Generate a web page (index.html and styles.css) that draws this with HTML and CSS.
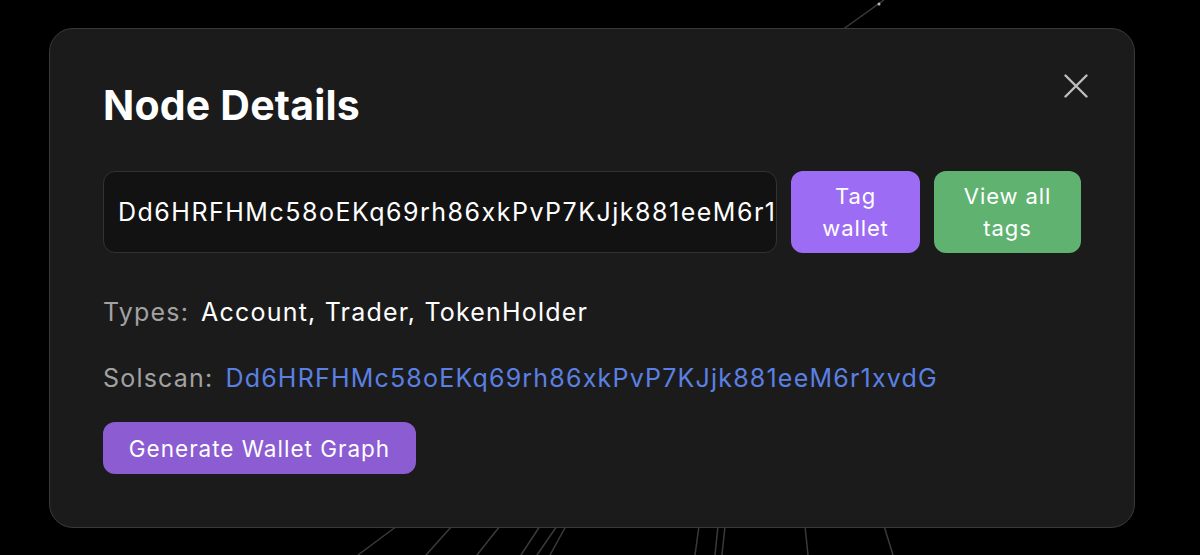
FILE: index.html
```html
<!DOCTYPE html>
<html lang="en">
<head>
<meta charset="utf-8">
<title>Node Details</title>
<link rel="stylesheet" href="styles.css">
</head>
<body>
<div class="stage">
  <svg class="graph" width="1200" height="555" viewBox="0 0 1200 555">
    <g stroke="#3a3a3a" stroke-width="1.5" fill="none">
      <line x1="884" y1="0" x2="842" y2="30"/>
      <line x1="397" y1="526" x2="358" y2="555"/>
      <line x1="452" y1="526" x2="426" y2="555"/>
      <line x1="500" y1="526" x2="477" y2="555"/>
      <line x1="540" y1="526" x2="521" y2="555"/>
      <line x1="557" y1="526" x2="537" y2="555"/>
      <line x1="566" y1="526" x2="550" y2="555"/>
      <line x1="699" y1="526" x2="695" y2="555"/>
      <line x1="718" y1="526" x2="715" y2="555"/>
      <line x1="725" y1="526" x2="722" y2="555"/>
      <line x1="805" y1="526" x2="808" y2="555"/>
      <line x1="884" y1="526" x2="893" y2="555"/>
    </g>
    <circle cx="879" cy="4" r="1.5" fill="#bbb"/>
  </svg>
  <div class="modal">
    <button class="close" aria-label="Close">
      <svg width="24" height="24" viewBox="0 0 24 24"><path d="M1.5 1.5L22.5 22.5M22.5 1.5L1.5 22.5" stroke="#bdbdbd" stroke-width="2.4" stroke-linecap="round"/></svg>
    </button>
    <h1 class="title">Node Details</h1>
    <div class="wallet-row">
      <input class="address-box" type="text" readonly value="Dd6HRFHMc58oEKq69rh86xkPvP7KJjk881eeM6r1xvdG">
      <button class="btn btn-tag">Tag<br>wallet</button>
      <button class="btn btn-view">View all<br>tags</button>
    </div>
    <div class="info-row">
      <span class="label">Types:</span>
      <span class="value">Account, Trader, TokenHolder</span>
    </div>
    <div class="info-row solscan">
      <span class="label">Solscan:</span>
      <a class="link" href="#">Dd6HRFHMc58oEKq69rh86xkPvP7KJjk881eeM6r1xvdG</a>
    </div>
    <button class="btn-generate">Generate Wallet Graph</button>
  </div>
</div>
</body>
</html>
```
FILE: styles.css
```css
* { box-sizing: border-box; }
html, body {
  margin: 0;
  padding: 0;
  background: #000;
}
body {
  font-family: Inter, "Open Sans", sans-serif;
  color: #fff;
}
.stage {
  position: relative;
  width: 1200px;
  height: 555px;
  overflow: hidden;
  padding: 28px 0 0 49px;
}
.graph {
  position: absolute;
  left: 0;
  top: 0;
}
.modal {
  position: relative;
  width: 1086px;
  height: 500px;
  background: #1b1b1b;
  border: 1.5px solid #3a3a3a;
  border-radius: 24px;
  padding: 53px 53px 0 53px;
}
.close {
  position: absolute;
  top: 45px;
  right: 46px;
  width: 24px;
  height: 24px;
  padding: 0;
  border: 0;
  background: none;
  display: flex;
}
.title {
  margin: 0;
  font-size: 41px;
  line-height: 46px;
  font-weight: 700;
  letter-spacing: 0.2px;
}
.wallet-row {
  display: flex;
  gap: 14px;
  margin-top: 43px;
  height: 82px;
}
.address-box {
  width: 674px;
  height: 82px;
  margin: 0;
  background: #121212;
  border: 1.5px solid #333;
  border-radius: 12px;
  padding: 0 0 0 14px;
  outline: none;
  font-family: inherit;
  font-size: 25px;
  letter-spacing: 1.5px;
  color: #fff;
}
.btn {
  border: 0;
  border-radius: 12px;
  color: #fff;
  font-family: inherit;
  font-size: 22px;
  letter-spacing: 0.9px;
  line-height: 32px;
  padding: 0;
  height: 82px;
}
.btn-tag {
  width: 129px;
  background: #9d6cf4;
}
.btn-view {
  width: 147px;
  background: #5fb270;
}
.info-row {
  margin-top: 44px;
  font-size: 25px;
  letter-spacing: 1.2px;
  line-height: 30px;
  display: flex;
  gap: 12px;
}
.info-row.solscan {
  margin-top: 36px;
}
.label {
  color: #a2a2a2;
}
.value {
  color: #fff;
}
.link {
  color: #5b80e3;
  text-decoration: none;
}
.btn-generate {
  margin-top: 29px;
  width: 313px;
  height: 52px;
  border: 0;
  border-radius: 12px;
  background: #8b5cd2;
  color: #fff;
  font-family: inherit;
  font-size: 22.5px;
  letter-spacing: 1px;
  padding: 0;
}
```
